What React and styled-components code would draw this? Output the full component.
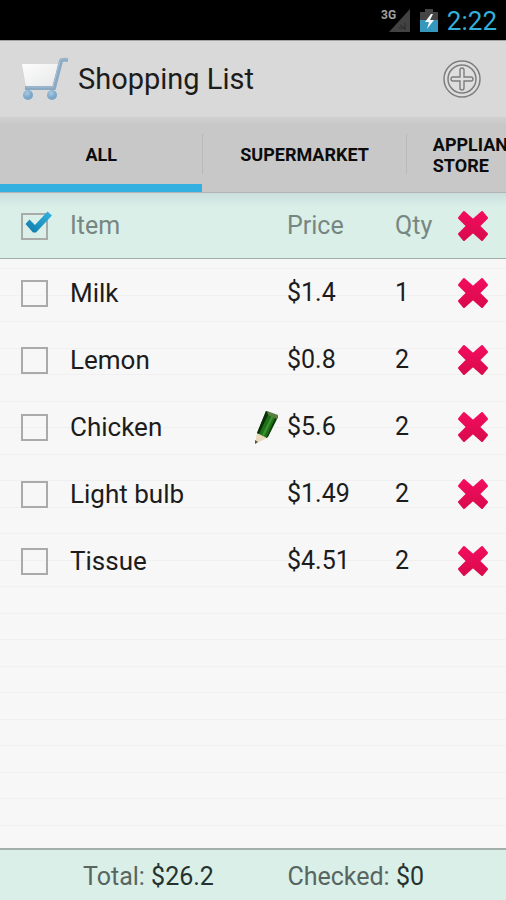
import { useState } from "react";
import styled, { createGlobalStyle } from "styled-components";

const GlobalStyle = createGlobalStyle`
  * {
    box-sizing: border-box;
  }

  body {
    margin: 0;
    font-family: Roboto, "Liberation Sans", sans-serif;
    color: #1c1c1c;
  }

  button {
    font-family: inherit;
    border: 0;
    padding: 0;
    background: none;
    color: inherit;
    cursor: pointer;
  }

  svg {
    display: block;
  }
`;

const Screen = styled.div`
  display: flex;
  flex-direction: column;
  min-height: 100vh;
  overflow: hidden;
  background-color: #f7f7f7;
`;

const StatusBar = styled.div`
  display: flex;
  justify-content: flex-end;
  align-items: center;
  gap: 9px;
  height: 40px;
  padding: 2px 9px 0 0;
  background: #000;
`;

const Clock = styled.time`
  font-size: 26px;
  line-height: 32px;
  color: #35b0da;
`;

const Header = styled.header`
  display: flex;
  align-items: center;
  gap: 8px;
  height: 77px;
  padding: 0 25px 0 20px;
  border-top: 1px solid #a4a4a4;
  background: #d9d9d9;
`;

const Title = styled.h1`
  flex: 1;
  margin: 0;
  font-size: 29px;
  font-weight: 400;
  line-height: 36px;
`;

const Tabs = styled.nav`
  display: flex;
  height: 76px;
  overflow: hidden;
  border-bottom: 1px solid #b0b4b3;
  background: linear-gradient(#d0d0d0, #c8c8c8 8px);
`;

const Tab = styled.button`
  display: flex;
  flex: 0 0 40%;
  align-items: center;
  justify-content: center;
  padding: 8px 26px 0;
  border-bottom: 8px solid ${(props) => (props.$active ? "#33b0e0" : "transparent")};
  font-size: 18px;
  font-weight: 700;
  line-height: 21px;
  text-align: left;
  color: #0c0c0c;
`;

const Divider = styled.span`
  flex: none;
  width: 1px;
  height: 40px;
  margin-top: 17px;
  background: #b9b9b9;
`;

const List = styled.main`
  flex: 1;
  background-image: linear-gradient(
    transparent 10px,
    #f0f0f0 10px 11px,
    transparent 11px 37px,
    #f0f0f0 37px 38px,
    transparent 38px
  );
  background-position: 0 65px;
  background-size: 100% 53px;
`;

const Table = styled.table`
  width: 100%;
  border-spacing: 0;
  table-layout: fixed;
  font-size: 25px;
  line-height: 32px;
  text-align: left;

  th,
  td {
    height: 67px;
    padding: 1px 0 0;
  }
`;

const HeadRow = styled.tr`
  background: linear-gradient(#cbdfdd, #d9efe8 14px);
  color: #788682;

  th {
    height: 66px;
    border-bottom: 1px solid #9fada9;
    font-weight: 400;
  }
`;

const Col = styled.col`
  width: ${(props) => props.$width}px;
`;

const ItemCell = styled.div`
  display: flex;
  align-items: center;
  justify-content: space-between;
  padding-right: 7px;
  font-size: 26px;
`;

const CheckLabel = styled.label`
  display: grid;
  width: 40px;
  height: 40px;
  margin-left: 15px;
  align-items: center;

  > * {
    grid-area: 1 / 1;
  }

  svg {
    pointer-events: none;
    visibility: hidden;
  }

  input:checked + svg {
    visibility: visible;
  }
`;

const CheckBox = styled.input`
  appearance: none;
  width: 27px;
  height: 27px;
  margin: 0 0 0 6px;
  border: 2px solid #a9aba9;
  background: transparent;
`;

const IconButton = styled.button`
  display: block;
  margin-left: ${(props) => props.$indent || 0}px;
`;

const Footer = styled.footer`
  display: flex;
  justify-content: space-between;
  height: 52px;
  align-items: center;
  padding: 3px 82px 0 83px;
  border-top: 2px solid #a3afab;
  background: #d9efe8;
  font-size: 25px;
  line-height: 32px;
  color: #586561;
`;

const Amount = styled.span`
  color: #26322e;
`;

const SignalIcon = () => (
  <svg width="30" height="28" viewBox="0 0 30 28" aria-label="3G signal">
    <text x="0" y="12" fontSize="12" fontWeight="700" fill="#a0a0a0">
      3G
    </text>
    <path d="M29 2V25H8Z" fill="#424242" />
    <path d="M19 18l5 4M24 16v7M18 21h6" stroke="#2a2a2a" strokeWidth="1" />
  </svg>
);

const BatteryIcon = () => (
  <svg width="18" height="26" viewBox="0 0 18 26" aria-hidden="true">
    <path d="M5 1h8v3h5v9H0V4h5Z" fill="#454545" />
    <path d="M0 12h18v12H0Z" fill="#3697bd" />
    <path d="M11 6L5 14h4l-2 7 7-9h-4l3-6Z" fill="#f4fafc" />
  </svg>
);

const CartIcon = () => (
  <svg width="50" height="46" viewBox="0 0 50 46" aria-hidden="true">
    <defs>
      <linearGradient id="basket" x1="0" y1="0" x2="1" y2="1">
        <stop offset="0" stopColor="#fdfdfd" />
        <stop offset="1" stopColor="#e6e7e8" />
      </linearGradient>
      <radialGradient id="wheel" cx="0.4" cy="0.3">
        <stop offset="0" stopColor="#a9c9e3" />
        <stop offset="1" stopColor="#7aa5c8" />
      </radialGradient>
    </defs>
    <path d="M2 8H38L33 31H6Z" fill="url(#basket)" />
    <path d="M5 32H34L41 5Q42 3 48 4" fill="none" stroke="#8ba9c2" strokeWidth="4" />
    <path d="M6 31H33L40 5Q41 2 48 3" fill="none" stroke="#a8c1d4" strokeWidth="1" />
    <circle cx="8" cy="39" r="5" fill="url(#wheel)" />
    <circle cx="32" cy="39" r="5" fill="url(#wheel)" />
  </svg>
);

const AddIcon = () => (
  <svg width="38" height="38" viewBox="0 0 38 38" fill="#dedede" stroke="#7e7e7e">
    <circle cx="19" cy="19" r="18" strokeWidth="1.5" />
    <circle cx="19" cy="19" r="14" strokeWidth="1.5" />
    <path
      d="M17 10q0-2 2-2t2 2v7h7q2 0 2 2t-2 2h-7v7q0 2-2 2t-2-2v-7h-7q-2 0-2-2t2-2h7Z"
      strokeWidth="1.4"
    />
  </svg>
);

const TickIcon = () => (
  <svg width="38" height="34" viewBox="0 0 38 34">
    <defs>
      <linearGradient id="tick" x1="0" y1="1" x2="1" y2="0">
        <stop offset="0" stopColor="#0f78a8" />
        <stop offset="1" stopColor="#35b4e2" />
      </linearGradient>
    </defs>
    <path d="M10.5 15l4-4.5 5.5 5.5L32.5 2.5l4.5 4L21 23.5h-3Z" fill="url(#tick)" />
  </svg>
);

const CrossIcon = () => (
  <svg width="32" height="32" viewBox="0 0 32 32" aria-hidden="true">
    <defs>
      <linearGradient id="cross" x1="0" y1="0" x2="0" y2="1">
        <stop offset="0" stopColor="#f20d5e" />
        <stop offset="1" stopColor="#d90a4c" />
      </linearGradient>
    </defs>
    <path
      d="M7 2l9 8 9-8 5 6-8 8 8 8-5 6-9-8-9 8-5-6 8-8-8-8Z"
      fill="url(#cross)"
      stroke="url(#cross)"
      strokeWidth="2"
      strokeLinejoin="round"
    />
  </svg>
);

const PencilIcon = () => (
  <svg width="26" height="34" viewBox="0 0 26 34" aria-hidden="true">
    <path d="M3 22L13 28 5 32 1 34Z" fill="#ead9bb" />
    <path d="M1 30l3 2-3 2Z" fill="#5c5448" />
    <path d="M12 1L24 6 13 28 3 23Z" fill="#1f7017" />
    <path d="M12 1l3 2L5 24l-2-1Z" fill="#0b2f0a" />
    <path d="M18 5l2 1L10 26l-2-1Z" fill="#3d9233" />
    <path d="M22 6l2 1-10 20-2 1Z" fill="#0d3b0b" />
    <path d="M13 1l11 4-1 4-9-4Z" fill="#5c7c42" />
  </svg>
);

const tabs = ["ALL", "SUPERMARKET", "APPLIANCE STORE"];

const items = [
  { name: "Milk", price: 1.4, qty: 1 },
  { name: "Lemon", price: 0.8, qty: 2 },
  { name: "Chicken", price: 5.6, qty: 2, hasNote: true },
  { name: "Light bulb", price: 1.49, qty: 2 },
  { name: "Tissue", price: 4.51, qty: 2 },
];

const sum = (list) =>
  Number(list.reduce((acc, item) => acc + item.price * item.qty, 0).toFixed(2));

const Check = ({ label, ...props }) => (
  <CheckLabel>
    <CheckBox type="checkbox" aria-label={label} {...props} />
    <TickIcon />
  </CheckLabel>
);

const ItemRow = ({ item, checked, onToggle, onDelete }) => (
  <tr>
    <td>
      <Check label={item.name} checked={checked} onChange={onToggle} />
    </td>
    <td>
      <ItemCell>
        {item.name}
        {item.hasNote && (
          <IconButton aria-label={`Edit ${item.name}`}>
            <PencilIcon />
          </IconButton>
        )}
      </ItemCell>
    </td>
    <td>${item.price}</td>
    <td>{item.qty}</td>
    <td>
      <IconButton $indent={17} aria-label={`Delete ${item.name}`} onClick={onDelete}>
        <CrossIcon />
      </IconButton>
    </td>
  </tr>
);

const App = () => {
  const [activeTab, setActiveTab] = useState("ALL");
  const [rows, setRows] = useState(items);
  const [checked, setChecked] = useState([]);

  const toggle = (name) =>
    setChecked(
      checked.includes(name) ? checked.filter((n) => n !== name) : [...checked, name],
    );
  const remove = (name) => setRows(rows.filter((row) => row.name !== name));

  return (
    <Screen>
      <GlobalStyle />
      <StatusBar>
        <SignalIcon />
        <BatteryIcon />
        <Clock>2:22</Clock>
      </StatusBar>
      <Header>
        <CartIcon />
        <Title>Shopping List</Title>
        <IconButton aria-label="Add item">
          <AddIcon />
        </IconButton>
      </Header>
      <Tabs>
        {tabs.map((tab, i) => [
          i > 0 && <Divider key={`${tab}-divider`} />,
          <Tab key={tab} $active={tab === activeTab} onClick={() => setActiveTab(tab)}>
            {tab}
          </Tab>,
        ])}
      </Tabs>
      <List>
        <Table>
          <colgroup>
            <Col $width={70} />
            <col />
            <Col $width={108} />
            <Col $width={45} />
            <Col $width={66} />
          </colgroup>
          <thead>
            <HeadRow>
              <th>
                <Check label="Show checked items" defaultChecked />
              </th>
              <th>Item</th>
              <th>Price</th>
              <th>Qty</th>
              <th>
                <IconButton $indent={17} aria-label="Delete all" onClick={() => setRows([])}>
                  <CrossIcon />
                </IconButton>
              </th>
            </HeadRow>
          </thead>
          <tbody>
            {rows.map((item) => (
              <ItemRow
                key={item.name}
                item={item}
                checked={checked.includes(item.name)}
                onToggle={() => toggle(item.name)}
                onDelete={() => remove(item.name)}
              />
            ))}
          </tbody>
        </Table>
      </List>
      <Footer>
        <div>
          Total: <Amount>${sum(rows)}</Amount>
        </div>
        <div>
          Checked: <Amount>${sum(rows.filter((row) => checked.includes(row.name)))}</Amount>
        </div>
      </Footer>
    </Screen>
  );
};

export default App;
